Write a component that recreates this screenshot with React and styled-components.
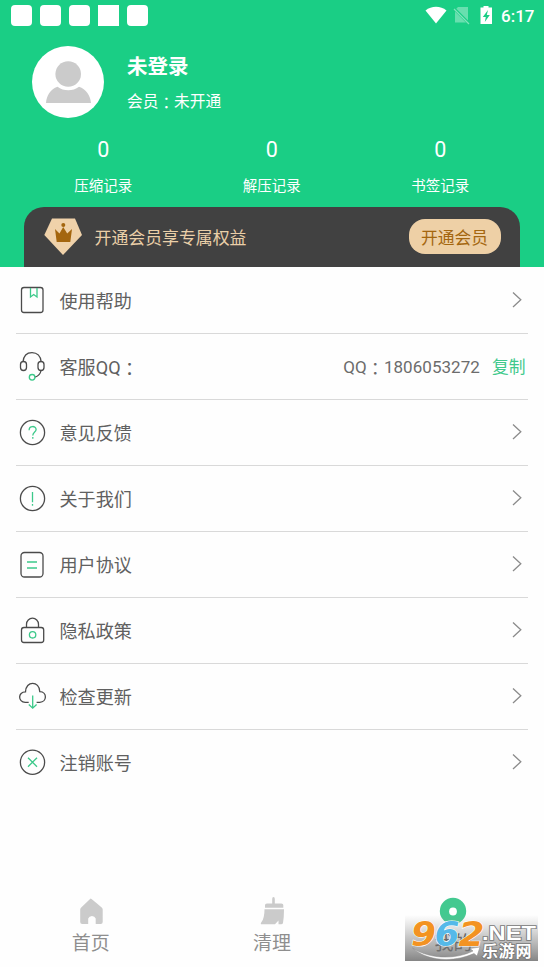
import React from "react";
import styled, { createGlobalStyle } from "styled-components";

const Global = createGlobalStyle`
  * { box-sizing: border-box; }
  body { margin: 0; background: #fff; }
`;

const Page = styled.div`
  width: 544px;
  height: 967px;
  overflow: hidden;
  display: flex;
  flex-direction: column;
  background: #fefefe;
  font-family: Roboto, "Noto Sans CJK SC", sans-serif;
  white-space: nowrap;
`;

const Header = styled.header`
  height: 267px;
  flex: none;
  display: flex;
  flex-direction: column;
  background: #1ace85;
  color: #fff;
`;

const StatusBar = styled.div`
  height: 32px;
  padding: 0 9px 0 11px;
  display: flex;
  align-items: center;
  justify-content: space-between;
`;

const Notices = styled.div`
  display: flex;
  gap: 8px;
  padding-bottom: 1px;
`;

const Notice = styled.span`
  width: 21px;
  height: 21px;
  background: #fff;
  border-radius: ${(p) => (p.$square ? 0 : 4)}px;
`;

const System = styled.div`
  display: flex;
  align-items: center;
  svg { display: block; }
`;

const Clock = styled.span`
  margin-left: 7px;
  width: 34px;
  font-size: 17px;
  font-weight: 500;
  line-height: 32px;
`;

const Profile = styled.div`
  display: flex;
  height: 86px;
  padding: 14px 0 0 32px;
  gap: 23px;
  svg { display: block; flex: none; }
`;

const Names = styled.div`
  display: flex;
  flex-direction: column;
`;

const UserName = styled.div`
  margin-top: 6px;
  font-size: 20.5px;
  line-height: 30px;
  font-weight: 700;
`;

const Membership = styled.div`
  margin-top: 8px;
  font-size: 15.7px;
  line-height: 24px;
`;

const Colon = styled.span`
  font-family: "Noto Sans CJK TC", sans-serif;
  line-height: 0;
  vertical-align: -2px;
`;

const Stats = styled.div`
  display: grid;
  grid-template-columns: repeat(3, 168.5px);
  justify-content: center;
  height: 89px;
  padding: 18px 0.5px 0 0;
  text-align: center;
`;

const StatValue = styled.div`
  font-size: 21.5px;
  line-height: 28px;
`;

const StatLabel = styled.div`
  margin-top: 12px;
  font-size: 14.5px;
  line-height: 22px;
`;

const VipBar = styled.div`
  height: 60px;
  margin: 0 24px;
  padding: 0 19.5px 0 20px;
  display: flex;
  align-items: center;
  border-radius: 20px 20px 0 0;
  background: #414141;
  color: #eacfa8;
`;

const VipText = styled.span`
  flex: 1;
  margin: -2px 0 0 12.5px;
  font-size: 16.9px;
`;

const VipButton = styled.button`
  width: 92px;
  height: 35px;
  margin-top: -1px;
  padding: 0;
  border: 0;
  border-radius: 16px;
  background: #eed0a6;
  color: #a4660f;
  font: 16.8px Roboto, "Noto Sans CJK SC", sans-serif;
`;

const Menu = styled.main`
  flex: 1;
  padding: 1px 16px 0;
`;

const Row = styled.div`
  height: 66px;
  display: flex;
  align-items: center;
  padding: 0 2.5px 0 0;
  border-bottom: 1px solid ${(p) => (p.$last ? "transparent" : "#d9d9d9")};
  color: #606060;
  svg { display: block; flex: none; }
`;

const RowLabel = styled.span`
  flex: 1;
  margin: -1px 0 0 11.5px;
  font-size: 18.1px;
`;

const Contact = styled.span`
  font-size: 17px;
  color: #6c6c6c;
  letter-spacing: 0.05px;
`;

const Copy = styled.span`
  margin: -1px 0 0 12px;
  font-size: 16.8px;
  color: #3fc98c;
`;

const Chevron = styled.svg`
  margin: -1px 2.5px 0 0;
`;

const Tabs = styled.nav`
  position: relative;
  height: 87px;
  flex: none;
  display: grid;
  grid-template-columns: repeat(3, 181.4px);
`;

const Tab = styled.div`
  display: flex;
  flex-direction: column;
  align-items: center;
  padding-top: 16px;
  font-size: 19px;
  line-height: 28px;
  color: ${(p) => (p.$active ? "#444" : "#8e8e8e")};
  svg { display: block; }
`;

const TabLabel = styled.span`
  margin-top: 4px;
`;

const Watermark = styled.svg`
  position: absolute;
  left: 405px;
  top: 35px;
`;

const icons = {
  help: (
    <>
      <rect x="5.5" y="3.5" width="21.5" height="25" rx="2.5" />
      <path stroke="#3cc98a" d="M14.5 4v9l3.2-2.5 3.3 2.5V4" />
    </>
  ),
  service: (
    <>
      <path d="M7 12C7.5 6 11 2.6 16 2.6S24.700 6 25.200 12" />
      <rect x="4.500" y="11.500" width="6" height="9" rx="3" />
      <rect x="22" y="11.500" width="6" height="9" rx="3" />
      <path d="M25 20.500c-.5 3-2.500 5.500-6 6.700" />
      <circle cx="16.100" cy="27.300" r="2.800" stroke="#3cc98a" />
    </>
  ),
  feedback: (
    <>
      <circle cx="16.5" cy="16.5" r="12.1" />
      <path stroke="#3cc98a" d="M13.1 14.2c0-5 7-4.6 7-.6 0 2.500-3.300 2.600-3.300 6M16.800 21v1.800" />
    </>
  ),
  about: (
    <>
      <circle cx="16.5" cy="16.5" r="12.1" />
      <path stroke="#3cc98a" d="M16.5 10v10.2M16.5 22v1.8" />
    </>
  ),
  terms: (
    <>
      <rect x="5" y="4.5" width="22" height="24.5" rx="3.5" />
      <path stroke="#3cc98a" d="M11 14h10M11 20h10" />
    </>
  ),
  privacy: (
    <>
      <rect x="5.5" y="13.5" width="22.2" height="15" rx="2.5" />
      <path d="M10.5 13.500V10.200a6 6 0 0 1 12 0v3.300" />
      <circle cx="16.6" cy="20.8" r="3.2" stroke="#3cc98a" />
    </>
  ),
  update: (
    <>
      <path d="M12.7 22.3H9.2c-7.4 0-7.5-10.5.3-10.4C9.7.5 23.500.5 23.800 11.700c7.700.2 7.200 10.600 0 10.600h-3.200" />
      <path stroke="#3cc98a" d="M16.7 15.500v12.500M12.800 24.500l3.900 3.700 3.900-3.700" />
    </>
  ),
  logout: (
    <>
      <circle cx="16.5" cy="16.2" r="12.1" />
      <path stroke="#3cc98a" d="m12 11.700 9 9m0-9-9 9" />
    </>
  ),
};

const MenuIcon = ({ name }) => (
  <svg width="32" height="33" viewBox="0 0 32 33" fill="none" stroke="#4b4b4b" strokeWidth="1.3">
    {icons[name]}
  </svg>
);

const Arrow = () => (
  <Chevron width="12" height="18" fill="none" stroke="#8b8b8b" strokeWidth="1.3">
    <path d="m2 1.500 7.800 7.300L2 16" />
  </Chevron>
);

const stats = ["压缩记录", "解压记录", "书签记录"];
const items = [
  ["help", "使用帮助"],
  ["service", "客服QQ"],
  ["feedback", "意见反馈"],
  ["about", "关于我们"],
  ["terms", "用户协议"],
  ["privacy", "隐私政策"],
  ["update", "检查更新"],
  ["logout", "注销账号"],
];

export default function App() {
  return (
    <Page>
      <Global />
      <Header>
        <StatusBar>
          <Notices>
            {[0, 1, 2, 3, 4].map((n) => <Notice key={n} $square={n === 3} />)}
          </Notices>
          <System>
            <svg width="70" height="22" viewBox="0 0 70 22" fill="#fff">
              <path d="M1.500 5.500C7.500.5 16.500.5 22.500 5.500L12 18.500Z" />
              <path opacity=".35" d="M34 2h10v15.500H31V5Z" />
              <path d="m29.500 3 15.500 15.500" stroke="#1ace85" strokeWidth="3" />
              <path d="m30 4 15 15" stroke="#fff" opacity=".45" strokeWidth="1.300" />
              <path d="M56.500 2.500h3V1h5v1.500H68V19H56.500Z" />
              <path fill="#1ace85" d="m64 5-5.200 7h3l-1 5 5-7h-3Z" />
            </svg>
            <Clock>6:17</Clock>
          </System>
        </StatusBar>
        <Profile>
          <svg width="72" height="72">
            <circle cx="36" cy="36" r="36" fill="#fff" />
            <path d="M14 57c.5-7.500 4.500-14 11.500-16.300 6 4.800 15.500 4.800 21.500 0C54 43 58.500 49.500 59 57Z" fill="#cbcbcb" />
            <circle cx="36.200" cy="28" r="14.800" fill="#fff" />
            <circle cx="36.200" cy="28" r="12.800" fill="#cbcbcb" />
          </svg>
          <Names>
            <UserName>未登录</UserName>
            <Membership>会员<Colon>：</Colon>未开通</Membership>
          </Names>
        </Profile>
        <Stats>
          {stats.map((label) => (
            <div key={label}>
              <StatValue>0</StatValue>
              <StatLabel>{label}</StatLabel>
            </div>
          ))}
        </Stats>
        <VipBar>
          <svg width="38" height="38">
            <path d="M8 .5h23l7 16.500L19 37 .3 17Z" fill="#f0d2aa" />
            <path d="m11 11 4.500 4.500L19.200 9l4 6.500L28 11l-1.700 13H12.700Z" fill="#a4660f" />
            <circle cx="19.300" cy="7" r="2" fill="#a4660f" />
          </svg>
          <VipText>开通会员享专属权益</VipText>
          <VipButton>开通会员</VipButton>
        </VipBar>
      </Header>
      <Menu>
        {items.map(([name, label], i) => (
          <Row key={name} $last={i === items.length - 1}>
            <MenuIcon name={name} />
            <RowLabel>{label}{name === "service" && <Colon>：</Colon>}</RowLabel>
            {name === "service" ? (
              <>
                <Contact>QQ<Colon>：</Colon>1806053272</Contact>
                <Copy>复制</Copy>
              </>
            ) : <Arrow />}
          </Row>
        ))}
      </Menu>
      <Tabs>
        <Tab>
          <svg width="28" height="30" fill="#cbcbcb">
            <path d="M13.900 2.500Q14.500 2.500 25 11.500q1 1 1 2v12.500q0 2-2 2h-5v-5.500a4 4 0 0 0-7.500 0V28h-6q-2 0-2-2V13.500q0-1 1-2Z" transform="translate(-.3 0)" />
          </svg>
          <TabLabel>首页</TabLabel>
        </Tab>
        <Tab>
          <svg width="28" height="30" fill="#cbcbcb">
            <path d="M15.500 1q1.300 0 1.300 2v4.500h6.500q2 0 2 1.500v2.800H7V9q0-1.500 2-1.500h5.200V3Q14.200 1 15.500 1ZM6.500 13.200H26Q26 21 25 27q-.3 1.300-2 1.300h-2.500V24.500L17 28.300H4Q1.800 28.300 3.500 26q3-4 3-12.800Z" />
          </svg>
          <TabLabel>清理</TabLabel>
        </Tab>
        <Tab $active>
          <svg width="28" height="30">
            <circle cx="14" cy="15" r="13.200" fill="#43c990" />
            <circle cx="14" cy="15.500" r="3.900" fill="#fff" />
          </svg>
          <TabLabel>我的</TabLabel>
        </Tab>
        <Watermark width="139" height="46" viewBox="0 0 139 46">
          <defs>
            <linearGradient id="shade" x1="0" y1="0" x2="0" y2="1">
              <stop offset="0" stopColor="#999" stopOpacity="0" />
              <stop offset=".5" stopColor="#8b8b8b" stopOpacity=".5" />
              <stop offset="1" stopColor="#777" stopOpacity=".9" />
            </linearGradient>
          </defs>
          <rect width="133" height="46" fill="url(#shade)" />
          <path d="M7.500 33C24 44 50 45 68 36l-3-2.500 10-1.500-3 9-3-2.500C48 48 22 46 7.500 33Z" fill="#fff" stroke="#888" strokeWidth=".5" />
          <g fontFamily="DejaVu Sans, sans-serif" fontWeight="700" fontStyle="italic" fontSize="34" stroke="#fff" strokeWidth="1.200" paintOrder="stroke">
            <text x="6" y="30.500" textLength="25" lengthAdjust="spacingAndGlyphs" fill="#f39322">9</text>
            <text x="29.500" y="30.500" textLength="25" lengthAdjust="spacingAndGlyphs" fill="#55b9e9">6</text>
            <text x="53.500" y="30.500" textLength="26" lengthAdjust="spacingAndGlyphs" fill="#f39322">2</text>
          </g>
          <g fill="#fff" stroke="#777" strokeWidth="1.600" paintOrder="stroke" fontWeight="700">
            <text x="77" y="24.500" fontFamily="Liberation Sans, sans-serif" fontSize="20" textLength="54" lengthAdjust="spacingAndGlyphs">.NET</text>
            <text x="77" y="41.500" fontFamily="Noto Sans CJK SC, sans-serif" fontSize="16" textLength="49.500">乐游网</text>
          </g>
        </Watermark>
      </Tabs>
    </Page>
  );
}
